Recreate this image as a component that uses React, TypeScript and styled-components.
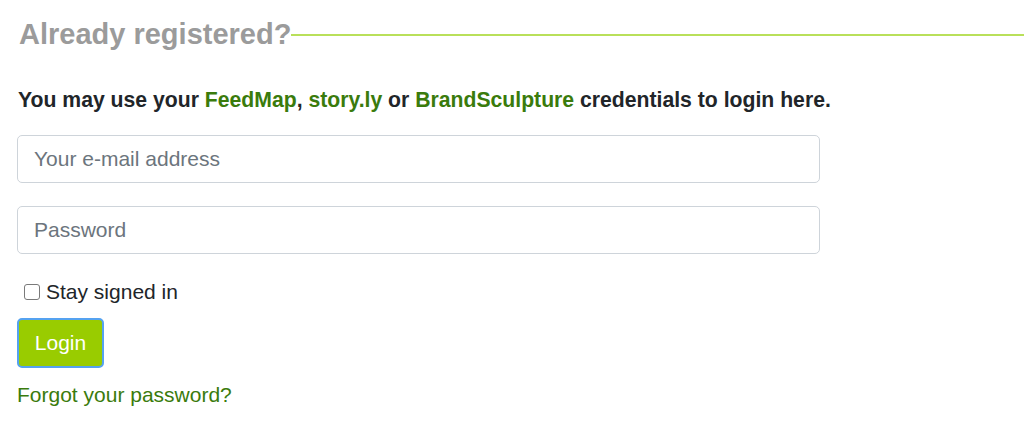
import React from "react";
import styled, { createGlobalStyle } from "styled-components";

const Global = createGlobalStyle`
  html, body { margin: 0; padding: 0; background: #fff; }
  body { font-family: "Liberation Sans", Arial, sans-serif; color: #212529; }
  * { box-sizing: border-box; }
`;

const Page = styled.div`
  padding: 17px 0 0 17px;
  display: flex;
  flex-direction: column;
`;

const HeadingRow = styled.div`
  display: flex;
  align-items: center;
  height: 34px;
`;

const Heading = styled.h2`
  margin: 0 0 0 2px;
  font-size: 29px;
  font-weight: 700;
  color: #9b9b9b;
  white-space: nowrap;
  line-height: 34px;
`;

const Rule = styled.div`
  flex: 1;
  height: 2px;
  background: #b9e05a;
  margin-top: 2px;
`;

const Intro = styled.p`
  margin: 35px 0 0 1px;
  font-size: 21.2px;
  font-weight: 700;
  line-height: 28px;
  white-space: nowrap;
`;

const Brand = styled.a`
  color: #3a7b0c;
  text-decoration: none;
`;

const Form = styled.form`
  display: flex;
  flex-direction: column;
  margin-top: 21px;
  width: 803px;
`;

const Input = styled.input`
  width: 100%;
  height: 48px;
  padding: 0 16px;
  font-family: "Liberation Sans", Arial, sans-serif;
  font-size: 21px;
  border: 1px solid #ced4da;
  border-radius: 5px;
  color: #495057;
  margin-bottom: 23px;
  &::placeholder { color: #6c757d; }
`;

const CheckRow = styled.label`
  display: flex;
  align-items: center;
  gap: 6px;
  font-size: 21px;
  margin: 2px 0 0 7px;
  height: 26px;
`;

const Box = styled.span`
  width: 16px;
  height: 16px;
  border: 1px solid #7a7a7a;
  border-radius: 3px;
  background: #fff;
  display: inline-block;
`;

const LoginButton = styled.button`
  align-self: flex-start;
  margin-top: 13px;
  height: 50px;
  width: 87px;
  background: #99cc00;
  color: #fff;
  font-family: "Liberation Sans", Arial, sans-serif;
  font-size: 21px;
  border: 2px solid #55a2f0;
  border-radius: 5px;
  padding: 0;
`;

const Forgot = styled.a`
  margin-top: 14px;
  font-size: 21px;
  color: #3a7b0c;
  text-decoration: none;
  line-height: 26px;
`;

export default function App() {
  return (
    <>
      <Global />
      <Page>
        <HeadingRow>
          <Heading>Already registered?</Heading>
          <Rule />
        </HeadingRow>
        <Intro>
          You may use your <Brand href="#">FeedMap</Brand>, <Brand href="#">story.ly</Brand> or{" "}
          <Brand href="#">BrandSculpture</Brand> credentials to login here.
        </Intro>
        <Form onSubmit={(e) => e.preventDefault()}>
          <Input type="email" placeholder="Your e-mail address" />
          <Input type="password" placeholder="Password" />
          <CheckRow>
            <Box />
            Stay signed in
          </CheckRow>
          <LoginButton type="submit">Login</LoginButton>
        </Form>
        <Forgot href="#">Forgot your password?</Forgot>
      </Page>
    </>
  );
}
